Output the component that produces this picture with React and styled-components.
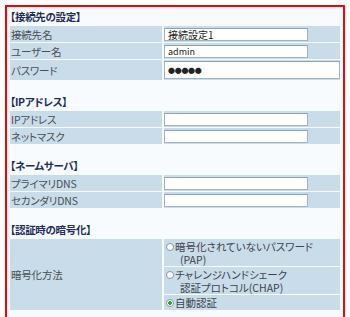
import React from "react";
import styled, { createGlobalStyle } from "styled-components";

const Global = createGlobalStyle`
  html, body { margin: 0; padding: 0; background: #ffffff; }
  body {
    font-family: "Noto Sans CJK JP", "Noto Sans", sans-serif;
    font-feature-settings: "palt";
    -webkit-font-smoothing: none;
  }
`;

const Frame = styled.div`
  box-sizing: border-box;
  width: 340px;
  margin: 5px 0 0 5px;
  border: 2px solid #ff0000;
  background: #f8fbfe;
  padding: 1px 3px 14px 3px;
`;

const Section = styled.section`
  & + & { margin-top: 13px; }
`;

const Heading = styled.h2`
  margin: 0;
  height: 18px;
  line-height: 18px;
  font-size: 10.5px;
  font-weight: bold;
  color: #1e2d5a;
  letter-spacing: -0.3px;
`;

const Grid = styled.div`
  display: grid;
  grid-template-columns: 152px 1fr;
  column-gap: 2px;
  row-gap: 1px;
`;

const Label = styled.div`
  background: #c8dcea;
  color: #4a4f55;
  font-size: 10.5px;
  line-height: 13px;
  display: flex;
  align-items: center;
  height: ${(p) => p.$h || 16}px;
  padding-left: 1px;
  letter-spacing: -0.2px;
`;

const Value = styled.div`
  background: #c8dcea;
  display: flex;
  align-items: center;
  height: ${(p) => p.$h || 16}px;
`;

const Field = styled.input`
  box-sizing: border-box;
  width: ${(p) => (p.$wide ? "100%" : "144px")};
  height: ${(p) => (p.$tall ? 18 : 13)}px;
  margin: 0;
  padding: 0 0 0 3px;
  border: 1px solid #9fb3c8;
  border-top-color: #8ea3ba;
  background: #ffffff;
  color: #222;
  font-family: "Noto Sans CJK JP", sans-serif;
  font-feature-settings: "palt";
  font-size: ${(p) => p.$fs || 10}px;
  outline: none;
  letter-spacing: ${(p) => p.$ls || 0}px;
`;

const TallLabel = styled(Label)`
  height: auto;
`;

const Choices = styled.div`
  display: flex;
  flex-direction: column;
  gap: 1px;
`;

const Choice = styled.label`
  background: #c8dcea;
  display: flex;
  align-items: flex-start;
  height: ${(p) => p.$h}px;
  padding-top: 1px;
  box-sizing: border-box;
  color: #3e444a;
  font-size: 10.5px;
  line-height: 13px;
`;

const Radio = styled.span`
  flex: none;
  box-sizing: border-box;
  width: 8px;
  height: 8px;
  margin: 3px 1px 0 2px;
  border-radius: 50%;
  border: 1px solid #8c99a6;
  background: radial-gradient(circle at 50% 50%, ${(p) => (p.$on ? "#2fa52f 0 1.6px, #ffffff 1.7px" : "#ffffff 0")});
`;

const Lines = styled.span`
  display: flex;
  flex-direction: column;
`;

const Line = styled.span`
  display: block;
  height: 13px;
  padding-left: ${(p) => (p.$sub ? 5 : 0)}px;
`;

export default function App() {
  return (
    <>
      <Global />
      <Frame>
        <Section>
          <Heading>【接続先の設定】</Heading>
          <Grid>
            <Label>接続先名</Label>
            <Value><Field readOnly value="接続設定1" /></Value>
            <Label>ユーザー名</Label>
            <Value><Field readOnly value="admin" $fs={9} /></Value>
            <Label $h={20}>パスワード</Label>
            <Value $h={20}><Field readOnly $wide $tall value="●●●●●" $fs={7} $ls={-0.3} /></Value>
          </Grid>
        </Section>
        <Section>
          <Heading>【IPアドレス】</Heading>
          <Grid>
            <Label>IPアドレス</Label>
            <Value><Field readOnly value="" /></Value>
            <Label>ネットマスク</Label>
            <Value><Field readOnly value="" /></Value>
          </Grid>
        </Section>
        <Section>
          <Heading>【ネームサーバ】</Heading>
          <Grid>
            <Label>プライマリDNS</Label>
            <Value><Field readOnly value="" /></Value>
            <Label>セカンダリDNS</Label>
            <Value><Field readOnly value="" /></Value>
          </Grid>
        </Section>
        <Section>
          <Heading>【認証時の暗号化】</Heading>
          <Grid>
            <TallLabel>暗号化方法</TallLabel>
            <Choices>
              <Choice $h={27}>
                <Radio />
                <Lines>
                  <Line>暗号化されていないパスワード</Line>
                  <Line $sub>(PAP)</Line>
                </Lines>
              </Choice>
              <Choice $h={27}>
                <Radio />
                <Lines>
                  <Line>チャレンジハンドシェーク</Line>
                  <Line $sub>認証プロトコル(CHAP)</Line>
                </Lines>
              </Choice>
              <Choice $h={15}>
                <Radio $on />
                <Lines>
                  <Line>自動認証</Line>
                </Lines>
              </Choice>
            </Choices>
          </Grid>
        </Section>
      </Frame>
    </>
  );
}
